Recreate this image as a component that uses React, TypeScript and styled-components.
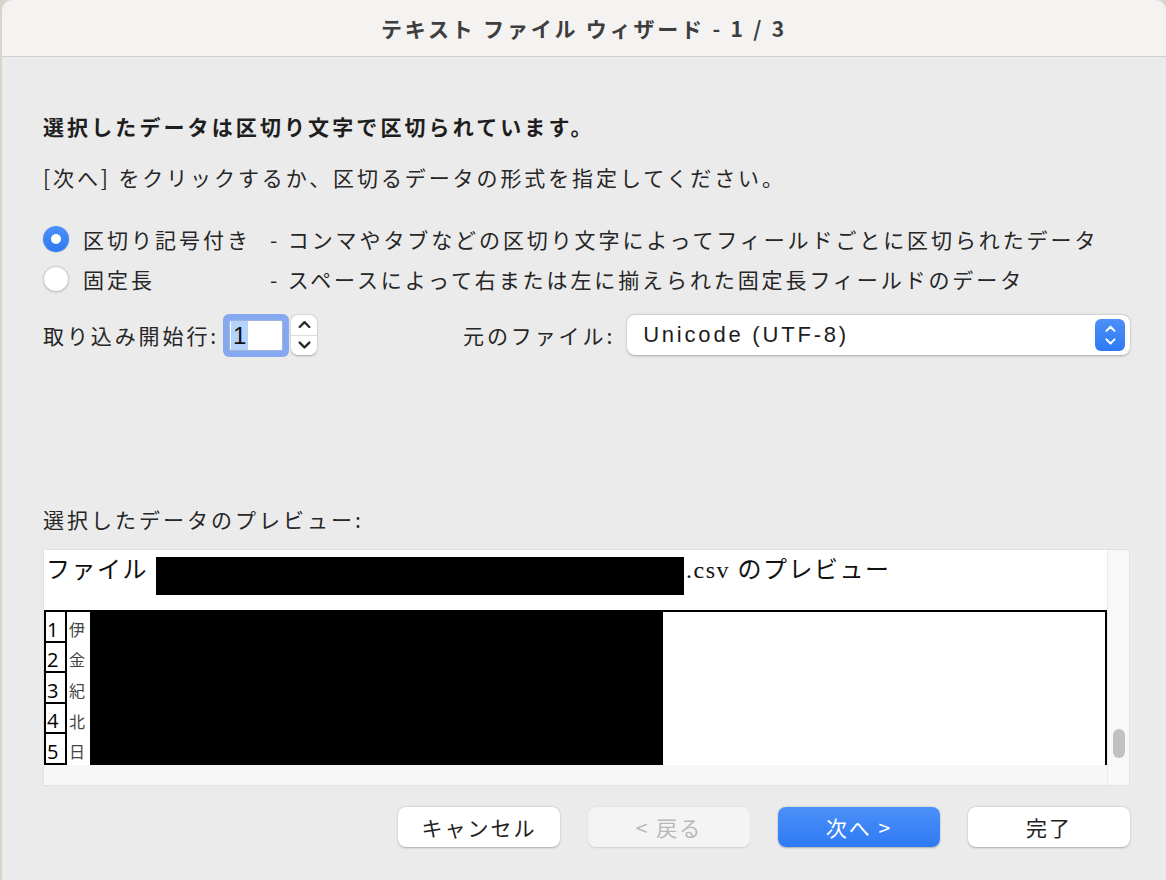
import React from 'react'
import styled, { createGlobalStyle } from 'styled-components'

const GlobalStyle = createGlobalStyle`
  html, body {
    margin: 0;
    padding: 0;
    background: #d9d5cb;
  }
  body {
    font-family: "Noto Sans CJK JP", "Liberation Sans", sans-serif;
    color: #262626;
  }
  * {
    box-sizing: border-box;
  }
`

const Chevron = ({ dir, color = '#2b2b2b', size = 12 }: { dir: 'up' | 'down'; color?: string; size?: number }) => (
  <svg width={size} height={size * 0.66} viewBox="0 0 12 8">
    <path
      d={dir === 'up' ? 'M1.5 6.5 L6 2 L10.5 6.5' : 'M1.5 1.5 L6 6 L10.5 1.5'}
      stroke={color}
      strokeWidth={2.2}
      fill="none"
      strokeLinecap="round"
      strokeLinejoin="round"
    />
  </svg>
)

export default function App() {
  return (
    <>
      <GlobalStyle />
      <Window>
        <TitleBar>
          <Title>テキスト ファイル ウィザード - 1 / 3</Title>
        </TitleBar>
        <Body>
          <Heading>選択したデータは区切り文字で区切られています。</Heading>
          <Text>[次へ] をクリックするか、区切るデータの形式を指定してください。</Text>

          <RadioGroup>
            <RadioRow>
              <Radio checked />
              <RadioLabel>区切り記号付き</RadioLabel>
              <Text>- コンマやタブなどの区切り文字によってフィールドごとに区切られたデータ</Text>
            </RadioRow>
            <RadioRow>
              <Radio />
              <RadioLabel>固定長</RadioLabel>
              <Text>- スペースによって右または左に揃えられた固定長フィールドのデータ</Text>
            </RadioRow>
          </RadioGroup>

          <OptionsRow>
            <StartGroup>
              <Text>取り込み開始行:</Text>
              <NumberField>
                <Selected>1</Selected>
              </NumberField>
              <Stepper>
                <StepHalf><Chevron dir="up" size={13} /></StepHalf>
                <StepHalf><Chevron dir="down" size={13} /></StepHalf>
              </Stepper>
            </StartGroup>
            <Text>元のファイル:</Text>
            <Select>
              <SelectValue>Unicode (UTF-8)</SelectValue>
              <SelectButton>
                <Chevron dir="up" color="#fff" size={11} />
                <Chevron dir="down" color="#fff" size={11} />
              </SelectButton>
            </Select>
          </OptionsRow>

          <PreviewLabel>選択したデータのプレビュー:</PreviewLabel>
          <Preview>
            <PreviewContent>
              <FileLine>
                <SerifText>ファイル</SerifText>
                <Redacted $w={528} $h={38} />
                <SerifText>.csv のプレビュー</SerifText>
              </FileLine>
              <Table>
                <NumCol>
                  {[1, 2, 3, 4, 5].map(n => (
                    <NumCell key={n}>{n}</NumCell>
                  ))}
                </NumCol>
                <CharCol>
                  {['伊', '金', '紀', '北', '日'].map(c => (
                    <CharCell key={c}>{c}</CharCell>
                  ))}
                </CharCol>
                <TableRedacted />
              </Table>
            </PreviewContent>
            <VTrack>
              <Thumb />
            </VTrack>
            <HTrack />
          </Preview>

          <Buttons>
            <Button>キャンセル</Button>
            <Button disabled>&lt; 戻る</Button>
            <Button $primary>次へ &gt;</Button>
            <Button>完了</Button>
          </Buttons>
        </Body>
      </Window>
    </>
  )
}

const Window = styled.div`
  margin-left: 2px;
  height: 880px;
  background: #ebebeb;
  border-radius: 11px 11px 0 0;
  overflow: hidden;
  display: flex;
  flex-direction: column;
`
const TitleBar = styled.div`
  height: 57px;
  flex: none;
  background: #f5f3f2;
  border-bottom: 1px solid #d2d0cf;
  display: flex;
  align-items: center;
  justify-content: center;
`
const Title = styled.div`
  font-size: 21px;
  font-weight: 700;
  letter-spacing: 2.8px;
  color: #3e3e3e;
`
const Body = styled.div`
  flex: 1;
  display: flex;
  flex-direction: column;
  padding: 0 36px 0 41px;
`
const Heading = styled.div`
  margin-top: 54px;
  font-size: 21px;
  line-height: 30px;
  font-weight: 700;
  letter-spacing: 3.1px;
  color: #1e1e1e;
`
const Text = styled.span`
  font-size: 21px;
  line-height: 30px;
  letter-spacing: 2.9px;
  color: #262626;
  white-space: nowrap;
  ${Heading} + & {
    margin-top: 21px;
  }
`
const RadioGroup = styled.div`
  margin-top: 27px;
  display: flex;
  flex-direction: column;
`
const RadioRow = styled.div`
  height: 40px;
  display: flex;
  align-items: center;
`
const Radio = styled.span<{ checked?: boolean }>`
  width: 26px;
  height: 26px;
  flex: none;
  border-radius: 50%;
  position: relative;
  background: ${p => (p.checked ? 'linear-gradient(#4c90f8, #2f79f4)' : '#fff')};
  border: ${p => (p.checked ? 'none' : '1px solid #cdcdcd')};
  box-shadow: 0 0.5px 1.5px rgba(0, 0, 0, 0.2);
  &::after {
    content: '';
    display: ${p => (p.checked ? 'block' : 'none')};
    position: absolute;
    width: 10px;
    height: 10px;
    border-radius: 50%;
    background: #fff;
    top: 8px;
    left: 8px;
  }
`
const RadioLabel = styled.span`
  width: 187px;
  margin-left: 14px;
  flex: none;
  font-size: 21px;
  line-height: 30px;
  letter-spacing: 3px;
`
const OptionsRow = styled.div`
  margin-top: 14px;
  height: 44px;
  display: flex;
  align-items: center;
`
const StartGroup = styled.div`
  width: 420px;
  flex: none;
  display: flex;
  align-items: center;
`
const NumberField = styled.div`
  margin-left: 10px;
  width: 54px;
  height: 31px;
  background: #fff;
  border: 1px solid #9fb4de;
  border-radius: 2px;
  box-shadow: 0 0 0 6px #86a8ee;
  display: flex;
  align-items: center;
  padding-left: 1px;
`
const Selected = styled.span`
  background: #b4d3fb;
  font-family: "Liberation Sans", sans-serif;
  font-size: 24px;
  line-height: 29px;
  padding: 0 2px;
  color: #111;
`
const Stepper = styled.div`
  margin-left: 8px;
  width: 26px;
  height: 40px;
  background: #fff;
  border-radius: 7px;
  box-shadow: 0 0.5px 2px rgba(0, 0, 0, 0.3);
  display: flex;
  flex-direction: column;
`
const StepHalf = styled.div`
  flex: 1;
  display: flex;
  align-items: center;
  justify-content: center;
  & + & {
    border-top: 1px solid #dedede;
  }
`
const Select = styled.div`
  margin-left: 12px;
  flex: 1;
  height: 40px;
  background: #fff;
  border-radius: 8px;
  box-shadow: 0 0.5px 2.5px rgba(0, 0, 0, 0.3);
  display: flex;
  align-items: center;
  justify-content: space-between;
  padding: 0 5px 0 16px;
`
const SelectValue = styled.span`
  font-family: "Liberation Sans", sans-serif;
  font-size: 22px;
  letter-spacing: 2.8px;
  color: #1d1d1d;
`
const SelectButton = styled.div`
  width: 30px;
  height: 32px;
  border-radius: 6px;
  background: linear-gradient(#4c90f8, #2f79f4);
  display: flex;
  flex-direction: column;
  align-items: center;
  justify-content: center;
  gap: 5px;
`
const PreviewLabel = styled.div`
  margin-top: 147px;
  font-size: 21px;
  line-height: 30px;
  letter-spacing: 3px;
`
const Preview = styled.div`
  margin-top: 15px;
  height: 237px;
  background: #fff;
  border: 1px solid #e2e2e2;
  display: grid;
  grid-template-columns: 1fr 22px;
  grid-template-rows: 1fr 20px;
`
const PreviewContent = styled.div`
  display: flex;
  flex-direction: column;
  overflow: hidden;
`
const FileLine = styled.div`
  height: 60px;
  flex: none;
  display: flex;
  align-items: flex-start;
  padding-left: 2px;
`
const SerifText = styled.span`
  margin-top: 5px;
  font-family: "Liberation Serif", "Noto Sans CJK JP", serif;
  font-size: 24px;
  line-height: 30px;
  letter-spacing: 1.5px;
  color: #111;
  white-space: nowrap;
`
const Redacted = styled.span<{ $w: number; $h: number }>`
  flex: none;
  margin: 7px 2px 0 8px;
  width: ${p => p.$w}px;
  height: ${p => p.$h}px;
  background: #000;
`
const Table = styled.div`
  height: 155px;
  flex: none;
  display: flex;
  border-top: 2px solid #000;
  border-right: 2px solid #000;
`
const NumCol = styled.div`
  width: 23px;
  flex: none;
  display: flex;
  flex-direction: column;
`
const NumCell = styled.div`
  flex: 1;
  border: 2px solid #000;
  border-top: none;
  display: flex;
  align-items: flex-end;
  padding-left: 1px;
  font-family: "Open Sans", "Liberation Sans", sans-serif;
  font-size: 20px;
  line-height: 23px;
  color: #000;
`
const CharCol = styled.div`
  width: 23px;
  flex: none;
  display: flex;
  flex-direction: column;
`
const CharCell = styled.div`
  flex: 1;
  display: flex;
  align-items: center;
  padding: 3px 0 0 2px;
  font-size: 16px;
  color: #444;
`
const TableRedacted = styled.div`
  flex: none;
  width: 573px;
  height: 155px;
  margin-top: -2px;
  background: #000;
`
const VTrack = styled.div`
  grid-row: 1 / 3;
  grid-column: 2;
  background: #f8f8f8;
  border-left: 1px solid #ebebeb;
  display: flex;
  flex-direction: column;
  justify-content: flex-end;
  align-items: center;
  padding-bottom: 27px;
`
const Thumb = styled.div`
  width: 12px;
  height: 29px;
  border-radius: 6px;
  background: #c1c1c1;
`
const HTrack = styled.div`
  grid-row: 2;
  grid-column: 1;
  background: #f7f7f7;
`
const Buttons = styled.div`
  margin-top: 21px;
  display: flex;
  justify-content: flex-end;
  gap: 28px;
`
const Button = styled.button<{ $primary?: boolean }>`
  width: 162px;
  height: 40px;
  border: none;
  border-radius: 8px;
  font-family: "Noto Sans CJK JP", "Liberation Sans", sans-serif;
  font-size: 21px;
  letter-spacing: 2px;
  background: ${p => (p.$primary ? 'linear-gradient(#4b91f8, #2f79f4)' : '#fff')};
  color: ${p => (p.$primary ? '#fff' : '#222')};
  box-shadow: 0 0.5px 2px rgba(0, 0, 0, 0.28);

  &:disabled {
    background: #f4f4f4;
    color: #b9b9b9;
    box-shadow: 0 0.5px 1.5px rgba(0, 0, 0, 0.12);
  }
`
